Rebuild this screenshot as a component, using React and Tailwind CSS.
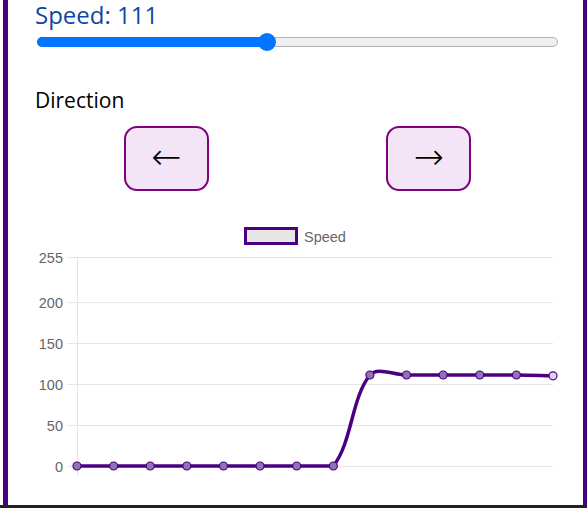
import React from 'react'

const speed = 111
const history = [0, 0, 0, 0, 0, 0, 0, 0, 111, 111, 111, 111, 111, 110]

// plot area in page pixels
const X0 = 77
const X1 = 553
const Y0 = 467
const Y_TOP = 258
const yOf = (v) => Y0 - (v / 255) * (Y0 - Y_TOP)
const clampY = (y) => Math.min(Y0, Math.max(Y_TOP, y))

// chart.js style spline, control points capped to the plot area
function splinePath(pts, t = 0.35) {
  const cps = pts.map((p, i) => {
    const prev = pts[i - 1] || p
    const next = pts[i + 1] || p
    const d01 = Math.hypot(p.x - prev.x, p.y - prev.y)
    const d12 = Math.hypot(next.x - p.x, next.y - p.y)
    const s01 = d01 / (d01 + d12 || 1)
    const s12 = d12 / (d01 + d12 || 1)
    const fa = t * s01
    const fb = t * s12
    return {
      px: p.x - fa * (next.x - prev.x),
      py: clampY(p.y - fa * (next.y - prev.y)),
      nx: p.x + fb * (next.x - prev.x),
      ny: clampY(p.y + fb * (next.y - prev.y)),
    }
  })
  let d = `M${pts[0].x},${pts[0].y}`
  for (let i = 1; i < pts.length; i++) {
    d += ` C${cps[i - 1].nx},${cps[i - 1].ny} ${cps[i].px},${cps[i].py} ${pts[i].x},${pts[i].y}`
  }
  return d
}

function SpeedChart() {
  const step = (X1 - X0) / (history.length - 1)
  const pts = history.map((v, i) => ({ x: X0 + i * step, y: yOf(v) }))
  const ticks = [0, 50, 100, 150, 200, 255]

  return (
    <svg
      width="525"
      height="285"
      viewBox="35 220 525 285"
      className="block"
      style={{ fontFamily: '"Liberation Sans", Arial, sans-serif' }}>
      {/* legend */}
      <rect x="245.5" y="229.5" width="51" height="15" fill="#e6e6e6" stroke="#4b0082" strokeWidth="3" />
      <text x="304" y="243" fontSize="14.5" fill="#666">Speed</text>

      {/* grid + ticks */}
      {ticks.map((v) => (
        <g key={v}>
          <line x1="67" x2={X1} y1={yOf(v) + 0.5} y2={yOf(v) + 0.5} stroke="#e5e5e5" strokeWidth="1" />
          <text x="63" y={yOf(v) + 5.5} fontSize="14.5" fill="#666" textAnchor="end">{v}</text>
        </g>
      ))}
      <line x1={X0 + 0.5} x2={X0 + 0.5} y1={Y_TOP} y2={Y0 + 10} stroke="#e5e5e5" strokeWidth="1" />

      {/* data */}
      <path d={splinePath(pts)} fill="none" stroke="#4b0082" strokeWidth="3.5" strokeLinejoin="round" />
      {pts.map((p, i) => (
        <circle
          key={i}
          cx={p.x}
          cy={p.y}
          r="4"
          fill={i === pts.length - 1 ? '#ddd3ee' : '#8f72b8'}
          stroke="#4b0082"
          strokeWidth="1.2" />
      ))}
    </svg>
  )
}

function Slider({ value, max = 255 }) {
  const pct = value / max
  // thumb travels inside the track, 18px thumb
  const left = `calc(${pct} * (100% - 18px) + 2px)`
  return (
    <div className="relative mx-[2px] h-[20px]">
      <div className="absolute left-0 right-0 top-[5px] h-[10px] rounded-full bg-[#efefef] border border-[#b2b2b2]" />
      <div
        className="absolute left-0 top-[5px] h-[10px] rounded-full bg-[#0075ff]"
        style={{ width: `calc(${left} + 9px)` }} />
      <div
        className="absolute top-[1px] w-[18px] h-[18px] rounded-full bg-[#0075ff]"
        style={{ left }} />
    </div>
  )
}

function ArrowButton({ children }) {
  return (
    <button
      className="w-[85px] h-[65px] rounded-[13px] border-2 border-[#800080]
        bg-[#f3e5f5] text-black text-[36px] font-extralight leading-none
        flex items-center justify-center pb-[3px]"
      style={{ fontFamily: '"DejaVu Sans", sans-serif' }}>
      {children}
    </button>
  )
}

export default function App() {
  return (
    <div className="w-[587px] h-[508px] overflow-hidden bg-white flex flex-col">
      <div className="flex-1 flex pl-[3px] min-h-0">
        <div
          className="w-[585px] shrink-0 border-x-[5px] border-[#4b0082]
            pl-[27px] pr-[23px] flex flex-col"
          style={{ fontFamily: '"Open Sans", "Noto Sans", sans-serif' }}>

          {/* ── speed ───────────────────── */}
          <div className="text-[24px] leading-[28px] pt-[1px] text-[#0d47a1]">
            Speed: {speed}
          </div>
          <div className="mt-[3px]">
            <Slider value={speed} />
          </div>

          {/* ── direction ───────────────── */}
          <div className="text-[21px] leading-[28px] text-black mt-[34px]">
            Direction
          </div>
          <div className="grid grid-cols-2 mt-[12px]">
            <div className="flex justify-center">
              <ArrowButton>←</ArrowButton>
            </div>
            <div className="flex justify-center">
              <ArrowButton>→</ArrowButton>
            </div>
          </div>

          {/* ── chart ───────────────────── */}
          <div className="mt-[28px]">
            <SpeedChart />
          </div>
        </div>
      </div>
      <div className="h-[3px] shrink-0 bg-[#222]" />
    </div>
  )
}
